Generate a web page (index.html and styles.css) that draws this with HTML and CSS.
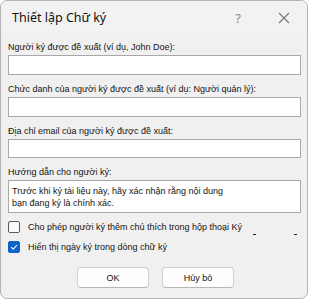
FILE: index.html
```html
<!DOCTYPE html>
<html lang="vi">
<head>
<meta charset="utf-8">
<link rel="stylesheet" href="styles.css">
</head>
<body>
<div class="window">
  <div class="titlebar">
    <span class="title">Thiết lập Chữ ký</span>
    <span class="help">?</span>
    <svg class="close" width="12" height="12" viewBox="0 0 12 12"><path d="M1 1 L11 11 M11 1 L1 11" stroke="#777" stroke-width="1.1" fill="none"/></svg>
  </div>
  <div class="content">
    <div class="field">
      <div class="label">Người ký được đề xuất (ví dụ, John Doe):</div>
      <div class="input"></div>
    </div>
    <div class="field">
      <div class="label">Chức danh của người ký được đề xuất (ví dụ: Người quản lý):</div>
      <div class="input"></div>
    </div>
    <div class="field">
      <div class="label">Địa chỉ email của người ký được đề xuất:</div>
      <div class="input short"></div>
    </div>
    <div class="field">
      <div class="label">Hướng dẫn cho người ký:</div>
      <div class="input area">Trước khi ký tài liệu này, hãy xác nhận rằng nội dung<br>bạn đang ký là chính xác.</div>
    </div>
    <div class="check first">
      <span class="box"></span>
      <span class="ctext">Cho phép người ký thêm chú thích trong hộp thoại Ký</span>
      <span class="dash d1"></span>
      <span class="dash d2"></span>
    </div>
    <div class="check">
      <span class="box on"><svg width="12" height="12" viewBox="0 0 12 12"><path d="M3.2 6.2 L5.2 8.2 L9 4" stroke="#fff" stroke-width="1.1" fill="none"/></svg></span>
      <span class="ctext">Hiển thị ngày ký trong dòng chữ ký</span>
    </div>
    <div class="buttons">
      <div class="btn">OK</div>
      <div class="btn">Hủy bỏ</div>
    </div>
  </div>
</div>
</body>
</html>
```
FILE: styles.css
```css
* { box-sizing: border-box; }
html, body { margin: 0; padding: 0; background: #ffffff; }
body { font-family: "Liberation Sans", Arial, sans-serif; color: #141414; }
.window {
  width: 308px;
  height: 299px;
  background: #f0f0f0;
  border: 1px solid #b4b4b4;
  border-radius: 7px;
  overflow: hidden;
}
.titlebar {
  height: 33px;
  display: flex;
  align-items: center;
  padding-left: 11px;
  background: #f2f2f2;
  position: relative;
}
.title { font-family: "Noto Sans", sans-serif; font-size: 12.5px; color: #111; flex: 1; }
.help { font-family: "Noto Sans", sans-serif; font-size: 13px; color: #8a8a8a; margin-right: 37px; }
.close { margin-right: 17px; }
.content { padding: 6px 0 0 7px; }
.field { margin-bottom: 7px; }
.label { font-size: 9px; line-height: 14px; height: 14px; margin-bottom: 1px; white-space: nowrap; }
.input {
  width: 293px;
  height: 20px;
  background: #fff;
  border: 1px solid #a8a8a8;
}
.input.short { height: 19px; }
.input.area { height: 33px; font-size: 9px; line-height: 12px; padding: 4px 3px; }
.check { display: flex; align-items: center; height: 13px; position: relative; font-size: 9px; }
.check.first { margin-top: 1px; margin-bottom: 7px; }
.box {
  width: 12px; height: 12px;
  border: 1px solid #5a5a5a;
  border-radius: 2px;
  background: #fbfbfb;
  margin-right: 8px;
  display: flex;
}
.box.on { background: #0f62c6; border-color: #0f62c6; }
.box.on svg { margin: -1px; }
.dash { position: absolute; top: 14px; width: 3px; height: 1px; background: #222; }
.d1 { left: 245px; }
.d2 { left: 286px; }
.buttons { display: flex; gap: 13px; margin-top: 14px; padding-left: 69px; }
.btn {
  width: 72px; height: 21px;
  background: #fdfdfd;
  border: 1px solid #cfcfcf;
  border-bottom-color: #b5b5b5;
  border-radius: 4px;
  font-size: 9px;
  display: flex; align-items: center; justify-content: center;
}
```
